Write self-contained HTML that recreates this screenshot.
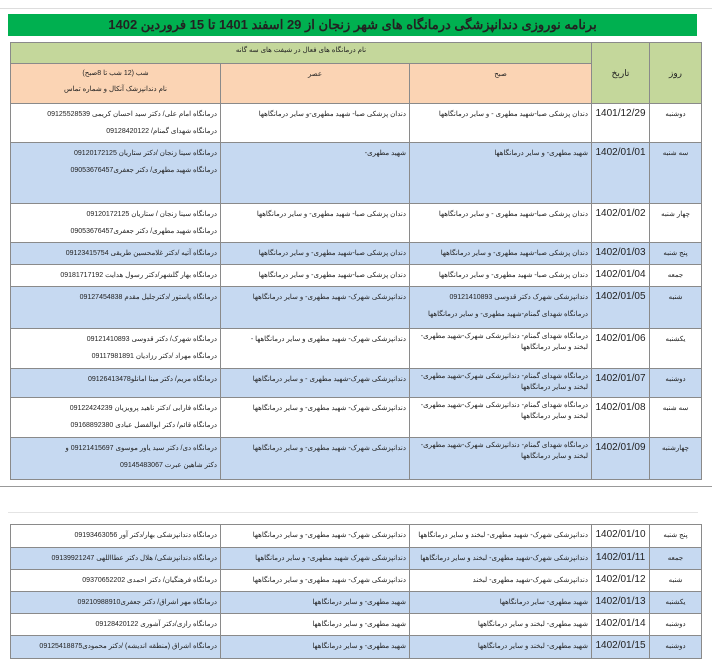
<!DOCTYPE html>
<html><head><meta charset="utf-8"><style>
body{margin:0;width:712px;height:661px;background:#fff;position:relative;overflow:hidden;font-family:"Liberation Sans","Noto Sans CJK SC",sans-serif;}
.title{position:absolute;left:8px;top:14px;width:689px;height:22px;background:#00b050;text-align:center;font-size:13px;line-height:22px;font-weight:bold;color:#222;direction:rtl;}
table{position:absolute;left:10px;border-collapse:collapse;table-layout:fixed;direction:rtl;font-size:7px;color:#222;}
td{border:1px solid #8a8a8a;vertical-align:top;text-align:right;padding:2px 3px;line-height:17px;overflow:hidden;white-space:nowrap;}
td.d{font-size:10px;text-align:center;line-height:16px;}
td.w{text-align:center;}
.b td{background:#c6d9f1;}
.g{background:#c4d79b;}
.o{background:#fbd4b4;text-align:center;}
.topline{position:absolute;left:0;top:0;width:712px;height:8px;border-bottom:1px solid #ddd;}
</style></head><body>
<div class="topline"></div>
<div class="title">برنامه نوروزی دندانپزشگی درمانگاه های شهر زنجان از 29 اسفند 1401 تا 15 فروردین 1402</div>
<table style="top:42px;width:691px">
<colgroup><col style="width:52px"><col style="width:58px"><col style="width:182px"><col style="width:189px"><col style="width:210px"></colgroup>
<tr style="height:21px"><td class="g w" rowspan="2" style="vertical-align:middle;font-size:9px">روز</td><td class="g w" rowspan="2" style="vertical-align:middle;font-size:9px">تاریخ</td><td class="g" colspan="3" style="text-align:center;line-height:12px">نام درمانگاه های فعال در شیفت های سه گانه</td></tr>
<tr style="height:40px"><td class="o">صبح</td><td class="o">عصر</td><td class="o" style="line-height:16px">شب (12 شب تا 8صبح)<br>نام دندانپزشک آنکال و شماره تماس</td></tr>
<tr style="height:39px"><td class="w">دوشنبه</td><td class="d">1401/12/29</td><td>دندان پزشکی صبا-شهید مطهری - و سایر درمانگاهها</td><td>دندان پزشکی صبا- شهید مطهری-و سایر درمانگاهها</td><td>درمانگاه امام علی/ دکتر سید احسان کریمی 09125528539<br>درمانگاه شهدای گمنام/ 09128420122</td></tr>
<tr class="b" style="height:61px"><td class="w">سه شنبه</td><td class="d">1402/01/01</td><td>شهید مطهری- و سایر درمانگاهها</td><td>شهید مطهری-</td><td>درمانگاه سینا زنجان /دکتر ستاریان 09120172125<br>درمانگاه شهید مطهری/ دکتر جعفری09053676457</td></tr>
<tr style="height:38px"><td class="w">چهار شنبه</td><td class="d">1402/01/02</td><td>دندان پزشکی صبا-شهید مطهری - و سایر درمانگاهها</td><td>دندان پزشکی صبا- شهید مطهری- و سایر درمانگاهها</td><td>درمانگاه سینا زنجان / ستاریان 09120172125<br>درمانگاه شهید مطهری/ دکتر جعفری09053676457</td></tr>
<tr class="b" style="height:20px"><td class="w">پنج شنبه</td><td class="d">1402/01/03</td><td>دندان پزشکی صبا-شهید مطهری- و سایر درمانگاهها</td><td>دندان پزشکی صبا-شهید مطهری- و سایر درمانگاهها</td><td>درمانگاه آتیه /دکتر غلامحسین طریقی 09123415754</td></tr>
<tr style="height:19px"><td class="w">جمعه</td><td class="d">1402/01/04</td><td>دندان پزشکی صبا- شهید مطهری- و سایر درمانگاهها</td><td>دندان پزشکی صبا-شهید مطهری- و سایر درمانگاهها</td><td>درمانگاه بهار گلشهر/دکتر رسول هدایت 09181717192</td></tr>
<tr class="b" style="height:42px"><td class="w">شنبه</td><td class="d">1402/01/05</td><td>دندانپزشکی شهرک دکتر قدوسی 09121410893<br>درمانگاه شهدای گمنام-شهید مطهری- و سایر درمانگاهها</td><td>دندانپزشکی شهرک- شهید مطهری- و سایر درمانگاهها</td><td>درمانگاه پاستور /دکترجلیل مقدم 09127454838</td></tr>
<tr style="height:40px"><td class="w">یکشنبه</td><td class="d">1402/01/06</td><td style="line-height:11px">درمانگاه شهدای گمنام- دندانپزشکی شهرک-شهید مطهری-<br>لبخند و سایر درمانگاهها</td><td>دندانپزشکی شهرک- شهید مطهری و سایر درمانگاهها -</td><td>درمانگاه شهرک/ دکتر قدوسی 09121410893<br>درمانگاه مهراد /دکتر رزادیان 09117981891</td></tr>
<tr class="b" style="height:29px"><td class="w">دوشنبه</td><td class="d">1402/01/07</td><td style="line-height:11px">درمانگاه شهدای گمنام- دندانپزشکی شهرک-شهید مطهری-<br>لبخند و سایر درمانگاهها</td><td>دندانپزشکی شهرک-شهید مطهری - و سایر درمانگاهها</td><td>درمانگاه مریم/ دکتر مینا امانلو09126413478</td></tr>
<tr style="height:40px"><td class="w">سه شنبه</td><td class="d">1402/01/08</td><td style="line-height:11px">درمانگاه شهدای گمنام- دندانپزشکی شهرک-شهید مطهری-<br>لبخند و سایر درمانگاهها</td><td>دندانپزشکی شهرک- شهید مطهری- و سایر درمانگاهها</td><td>درمانگاه فارابی /دکتر ناهید پرویزیان 09122424239<br>درمانگاه قائم/ دکتر ابوالفضل عبادی 09168892380</td></tr>
<tr class="b" style="height:42px"><td class="w">چهارشنبه</td><td class="d">1402/01/09</td><td style="line-height:11px">درمانگاه شهدای گمنام- دندانپزشکی شهرک-شهید مطهری-<br>لبخند و سایر درمانگاهها</td><td>دندانپزشکی شهرک- شهید مطهری- و سایر درمانگاهها</td><td>درمانگاه دی/ دکتر سید یاور موسوی 09121415697 و<br>دکتر شاهین عبرت 09145483067</td></tr>
</table>
<div style="position:absolute;left:0;top:486px;width:712px;border-top:1px solid #999"></div>
<div style="position:absolute;left:8px;top:512px;width:690px;border-top:1px solid #e4e4e4"></div>
<table style="top:524px;width:691px">
<colgroup><col style="width:52px"><col style="width:58px"><col style="width:182px"><col style="width:189px"><col style="width:210px"></colgroup>
<tr style="height:23px"><td class="w">پنج شنبه</td><td class="d">1402/01/10</td><td>دندانپزشکی شهرک- شهید مطهری- لبخند و سایر درمانگاهها</td><td>دندانپزشکی شهرک- شهید مطهری- و سایر درمانگاهها</td><td>درمانگاه دندانپزشکی بهار/دکتر آور 09193463056</td></tr>
<tr class="b" style="height:19px"><td class="w">جمعه</td><td class="d">1402/01/11</td><td>دندانپزشکی شهرک-شهید مطهری- لبخند و سایر درمانگاهها</td><td>دندانپزشکی شهرک شهید مطهری- و سایر درمانگاهها</td><td>درمانگاه دندانپزشکی/ هلال دکتر عطااللهی 09139921247</td></tr>
<tr style="height:21px"><td class="w">شنبه</td><td class="d">1402/01/12</td><td>دندانپزشکی شهرک-شهید مطهری- لبخند</td><td>دندانپزشکی شهرک- شهید مطهری- و سایر درمانگاهها</td><td>درمانگاه فرهنگیان/ دکتر احمدی 09370652202</td></tr>
<tr class="b" style="height:20px"><td class="w">یکشنبه</td><td class="d">1402/01/13</td><td>شهید مطهری- سایر درمانگاهها</td><td>شهید مطهری- و سایر درمانگاهها</td><td>درمانگاه مهر اشراق/ دکتر جعفری09210988910</td></tr>
<tr style="height:21px"><td class="w">دوشنبه</td><td class="d">1402/01/14</td><td>شهید مطهری- لبخند و سایر درمانگاهها</td><td>شهید مطهری- و سایر درمانگاهها</td><td>درمانگاه رازی/دکتر آشوری 09128420122</td></tr>
<tr class="b" style="height:23px"><td class="w">دوشنبه</td><td class="d">1402/01/15</td><td>شهید مطهری- لبخند و سایر درمانگاهها</td><td>شهید مطهری- و سایر درمانگاهها</td><td>درمانگاه اشراق (منطقه اندیشه) /دکتر محمودی09125418875</td></tr>
</table>
</body></html>
